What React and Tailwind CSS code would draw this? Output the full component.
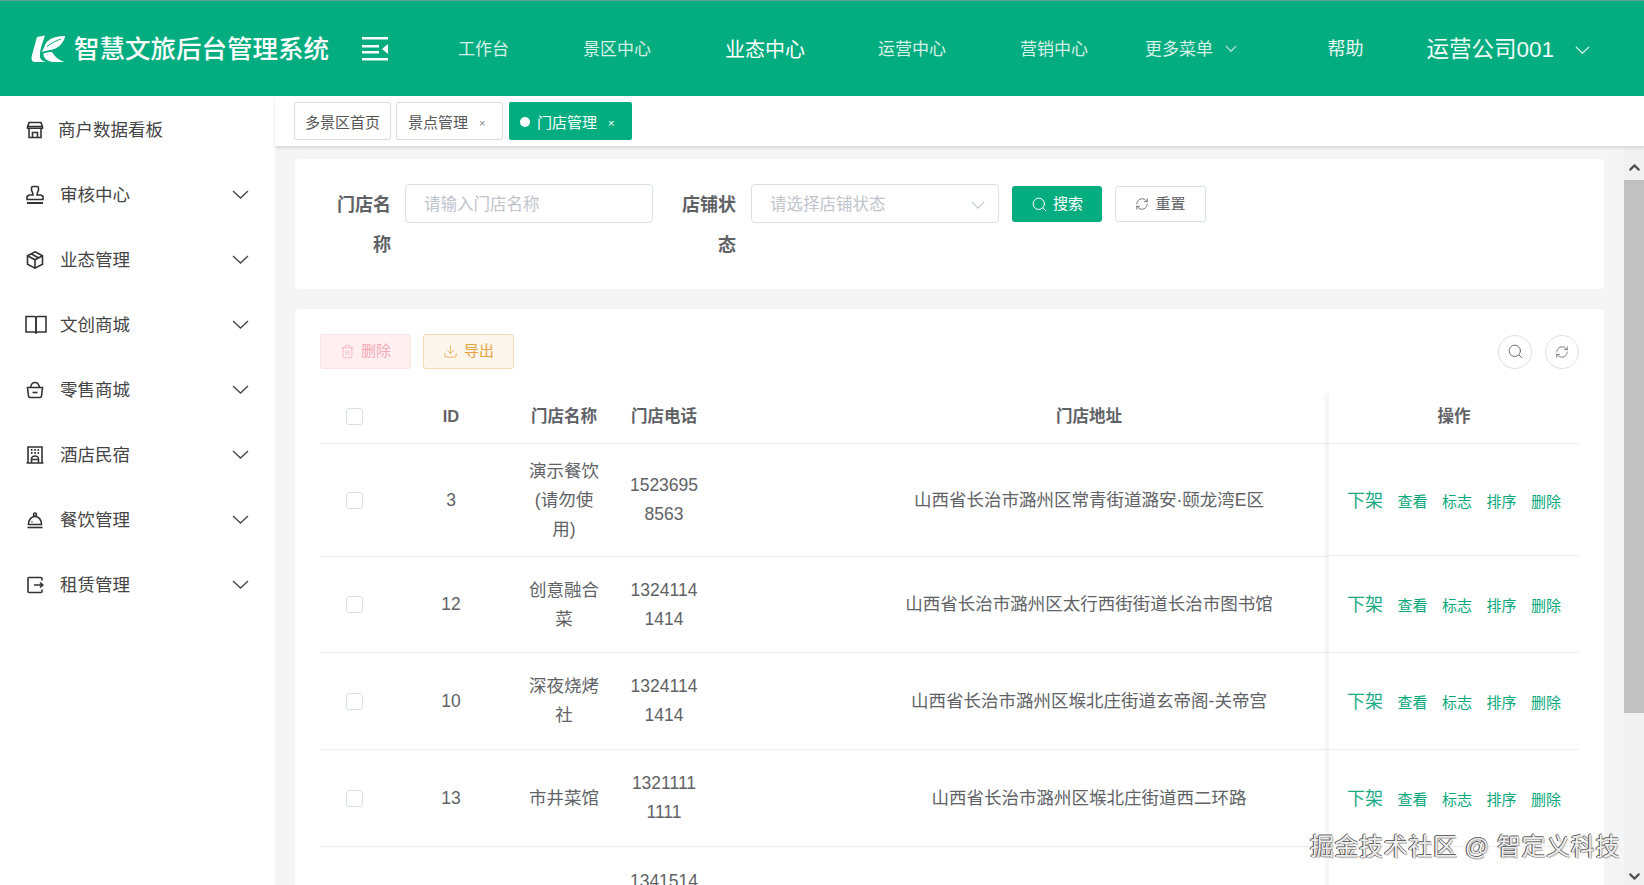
import { ChevronDown, ChevronUp, Search, RefreshCw, Trash2, Download } from "lucide-react";

const NAV = [
  { label: "工作台", className: "text-[17px] text-[#d6f1e8] ml-0" },
  { label: "景区中心", className: "text-[17px] text-[#d6f1e8] ml-[74px]" },
  { label: "业态中心", className: "text-[20px] text-white ml-[74px]" },
  { label: "运营中心", className: "text-[17px] text-[#d6f1e8] ml-[73px]" },
  { label: "营销中心", className: "text-[17px] text-[#d6f1e8] ml-[74px]" },
];

const iconProps = {
  width: 20,
  height: 20,
  viewBox: "0 0 20 20",
  fill: "none",
  stroke: "#333",
  strokeWidth: 1.6,
};

// the reference's chevrons are wide and flat, lucide's are too narrow
const Chevron = ({ width = 17, height = 9, className = "" }) => (
  <svg className={className} width={width} height={height} viewBox="0 0 17 9" fill="none" stroke="currentColor" strokeWidth="1.3" preserveAspectRatio="none">
    <path d="M1 1l7.500 7L16 1" />
  </svg>
);

const StoreIcon = () => (
  <svg {...iconProps}>
    <path d="M4 2.500h12l1.500 4.500v1.200h-15V7z" />
    <path d="M2.500 6.500h15" />
    <path d="M4 8.500v9h12v-9" />
    <path d="M7.500 17.500v-5h5v5" />
  </svg>
);
const StampIcon = () => (
  <svg {...iconProps}>
    <path d="M8 1.500h4c1 0 1.500.7 1.500 1.500v2c0 1-1.500 2.500-1.500 5h4l2 1.500v3H2v-3L4 10h4c0-2.500-1.500-4-1.500-5V3c0-.8.500-1.500 1.500-1.500z" />
    <path d="M2 18h16" strokeWidth="2" />
  </svg>
);
const BoxIcon = () => (
  <svg {...iconProps}>
    <path d="M10 1.800l7.500 4v8.400l-7.500 4-7.500-4V5.800z" />
    <path d="M2.500 5.800l7.500 4 7.500-4M10 9.800v8.400M6 3.800l7.500 4" />
  </svg>
);
const BookIcon = () => (
  <svg {...iconProps} width="22" height="20" viewBox="0 0 22 20">
    <path d="M1 1.500h8c1.200 0 2 .8 2 2v15c0-.8-.8-1.500-2-1.500H1z" />
    <path d="M21 1.500h-8c-1.200 0-2 .8-2 2v15c0-.8.8-1.500 2-1.500h8z" />
  </svg>
);
const BasketIcon = () => (
  <svg {...iconProps}>
    <path d="M2.500 7.500h15l-1 8.500c-.1 1-.8 1.500-1.600 1.500H5.100c-.8 0-1.500-.5-1.600-1.500z" />
    <path d="M5.500 7.500C6 4.500 8 2.500 10 2.500s4 2 4.500 5" />
    <path d="M7.500 12.500h5" />
  </svg>
);
const HotelIcon = () => (
  <svg {...iconProps}>
    <path d="M3 18V2h14v16M1.500 18h17" />
    <path d="M6 5h1.500M9.300 5h1.500M12.600 5H14M6 8h1.500M9.300 8h1.500M12.600 8H14" strokeWidth="1.800" />
    <path d="M6.500 18v-4c0-1.500 1.500-3 3.500-3s3.500 1.500 3.500 3v4M6.500 14.500h7" />
  </svg>
);
const BellIcon = () => (
  <svg {...iconProps}>
    <path d="M3.500 14.500c0-5 3-8 6.500-8s6.500 3 6.500 8z" />
    <circle cx="10" cy="4.500" r="1.500" />
    <path d="M2.500 17.500h15" />
    <path d="M7 11.500v.8" strokeWidth="2" />
  </svg>
);
const ExitIcon = () => (
  <svg {...iconProps}>
    <path d="M17 5.500V3.500c0-.6-.4-1-1-1H4c-.6 0-1 .4-1 1v13c0 .6.4 1 1 1h12c.6 0 1-.4 1-1v-2" />
    <path d="M9 10h9M15 7.500l2.800 2.500-2.800 2.500" />
  </svg>
);

const MENU = [
  { label: "审核中心", Icon: StampIcon },
  { label: "业态管理", Icon: BoxIcon },
  { label: "文创商城", Icon: BookIcon },
  { label: "零售商城", Icon: BasketIcon },
  { label: "酒店民宿", Icon: HotelIcon },
  { label: "餐饮管理", Icon: BellIcon },
  { label: "租赁管理", Icon: ExitIcon },
];

const ROWS = [
  { id: "3", name: "演示餐饮(请勿使用)", phone: ["1523695", "8563"], address: "山西省长治市潞州区常青街道潞安·颐龙湾E区", height: "h-[113px]", opsHeight: "h-[112px]" },
  { id: "12", name: "创意融合菜", phone: ["1324114", "1414"], address: "山西省长治市潞州区太行西街街道长治市图书馆", height: "h-[96px]", opsHeight: "h-[97px]" },
  { id: "10", name: "深夜烧烤社", phone: ["1324114", "1414"], address: "山西省长治市潞州区堠北庄街道玄帝阁-关帝宫", height: "h-[97px]", opsHeight: "h-[97px]" },
  { id: "13", name: "市井菜馆", phone: ["1321111", "1111"], address: "山西省长治市潞州区堠北庄街道西二环路", height: "h-[97px]", opsHeight: "h-[97px]" },
];

function Checkbox() {
  return <span className="block w-[17px] h-[17px] rounded-[3px] border border-[#dcdfe6] bg-white" />;
}

function Logo() {
  return (
    <svg width="34" height="28" viewBox="0 0 34 28" fill="#fff">
      <path d="M6 2 L14 0.500 C11 9 8.500 16 9 22 C9.300 24.500 11 26 15 27 L4 27 C0.500 27 0 23.500 1 20 Z" />
      <path d="M34 1 C26 1 17 3 14 10 C13 13 12 15 10.500 17 C17 15 27 15 31 8 C33 5 34 3 34 1 Z" />
      <path d="M16 11.500 C20 8 25 6 30 4" stroke="#04ad7f" strokeWidth="1" fill="none" />
      <path d="M12.500 18.500 C15 17.500 18 17 21 17 C24 22 28 25.500 33.500 27 L21 27 C16 26 12 22.500 12.500 18.500 Z" />
    </svg>
  );
}

function Header() {
  return (
    <header className="h-[96px] shrink-0 flex items-center bg-[#04ad7f] border-t border-[#5fa592] pl-[31px] pr-[54px]">
      <Logo />
      <span className="ml-[9px] pt-[1px] w-[255px] text-[25.500px] font-medium text-white whitespace-nowrap">智慧文旅后台管理系统</span>
      <svg className="ml-[33px]" width="27" height="24" viewBox="0 0 27 24" fill="#fff">
        <rect x="0" y="0" width="26" height="2.500" />
        <rect x="0" y="8" width="17" height="2.500" />
        <rect x="0" y="14" width="17" height="2.500" />
        <rect x="0" y="21" width="26" height="2.500" />
        <path d="M26 7 V17 L20 12 Z" />
      </svg>
      <nav className="flex items-center ml-[69px] pt-[2px]">
        {NAV.map((item) => (
          <span key={item.label} className={`whitespace-nowrap ${item.className}`}>{item.label}</span>
        ))}
        <span className="ml-[57px] text-[17px] text-[#d6f1e8] whitespace-nowrap">更多菜单</span>
        <Chevron width={12} height={7} className="ml-[12px] mb-[2px] text-[#d6f1e8]" />
      </nav>
      <div className="ml-auto flex items-center pt-[2px]">
        <span className="text-[18px] text-[#e8f8f3]">帮助</span>
        <span className="ml-[63px] text-[22.500px] text-[#f2fbf8] whitespace-nowrap">运营公司001</span>
        <Chevron width={15} height={8} className="ml-[21px] text-[#e8f8f3]" />
      </div>
    </header>
  );
}

function Sidebar() {
  return (
    <aside className="w-[275px] shrink-0 bg-white pt-[1px] text-[#444]">
      <div className="h-[65px] flex items-center pl-[25px] gap-[13px]">
        <StoreIcon />
        <span className="pt-[2px] text-[17.500px]">商户数据看板</span>
      </div>
      {MENU.map(({ label, Icon }) => (
        <div key={label} className="h-[65px] flex items-center pl-[25px] pr-[26px]">
          <span className="w-[35px] flex"><Icon /></span>
          <span className="pt-[2px] text-[17.500px]">{label}</span>
          <Chevron className="ml-auto" />
        </div>
      ))}
    </aside>
  );
}

function Tabs() {
  return (
    <div className="h-[50px] shrink-0 bg-white flex items-start pt-[6px] pl-[19px] shadow-[0_2px_3px_rgba(0,0,0,0.12)] relative text-[15px] text-[#555]">
      <span className="h-[38px] w-[97px] pt-[4px] flex items-center justify-center border border-[#dcdcdc] rounded-[2px]">多景区首页</span>
      <span className="ml-[5px] h-[38px] w-[107px] pt-[4px] flex items-center pl-[11px] border border-[#dcdcdc] rounded-[2px]">
        景点管理<span className="ml-[11px] text-[11px] text-[#888]">×</span>
      </span>
      <span className="ml-[6px] h-[38px] w-[123px] pt-[4px] flex items-center pl-[11px] rounded-[2px] bg-[#04ad7f] text-white">
        <span className="w-[10px] h-[10px] rounded-full bg-white mr-[7px] mb-[3px]" />
        门店管理<span className="ml-[11px] text-[11px]">×</span>
      </span>
    </div>
  );
}

function SearchCard() {
  return (
    <section className="h-[130px] shrink-0 bg-white rounded-[4px] flex items-start pt-[25px] pl-[26px]">
      <label className="w-[70px] pt-[1px] text-right text-[18px] leading-[40px] font-bold text-[#606266]">门店名称</label>
      <input
        className="ml-[14px] w-[248px] h-[39px] rounded-[4px] border border-[#dcdfe6] pl-[18px] pt-[2px] text-[16.500px] outline-none placeholder:text-[#c0c4cc]"
        placeholder="请输入门店名称"
      />
      <label className="ml-[13px] w-[70px] pt-[1px] text-right text-[18px] leading-[40px] font-bold text-[#606266]">店铺状态</label>
      <div className="ml-[15px] w-[248px] h-[39px] rounded-[4px] border border-[#dcdfe6] pl-[18px] pr-[13px] pt-[2px] flex items-center justify-between text-[16.500px] text-[#c0c4cc]">
        请选择店铺状态
        <Chevron width={14} height={8} />
      </div>
      <button className="ml-[13px] mt-[2px] w-[90px] h-[36px] rounded-[3px] bg-[#04ad7f] text-white text-[15px] flex items-center justify-center gap-[5px]">
        <Search size={17} strokeWidth={1.4} /><span className="pt-[1px]">搜索</span>
      </button>
      <button className="ml-[13px] mt-[2px] w-[91px] h-[36px] rounded-[3px] bg-white border border-[#dcdfe6] text-[#606266] text-[15px] flex items-center justify-center gap-[6px]">
        <RefreshCw size={14} strokeWidth={1.4} /><span className="pt-[1px]">重置</span>
      </button>
    </section>
  );
}

function OpsCell() {
  return (
    <div className="h-full pt-[3px] flex items-center justify-center gap-[14.500px] text-[15px] text-[#07a87c]">
      <span className="text-[18px] text-[#1aab85]">下架</span>
      <span>查看</span>
      <span>标志</span>
      <span>排序</span>
      <span>删除</span>
    </div>
  );
}

function DataTable() {
  return (
    <div className="relative mt-[21px] flex-1 overflow-hidden text-[17.500px] leading-[29px] text-[#606266] text-center">
      <div className="h-[54px] flex items-center border-b border-[#ebeef5] text-[16.500px] font-bold">
        <div className="w-[68px] flex justify-center"><Checkbox /></div>
        <div className="w-[126px]">ID</div>
        <div className="w-[100px]">门店名称</div>
        <div className="w-[100px]">门店电话</div>
        <div className="w-[750px]">门店地址</div>
      </div>
      {ROWS.map((row) => (
        <div key={row.id} className={`flex items-center border-b border-[#ebeef5] ${row.height}`}>
          <div className="w-[68px] flex justify-center"><Checkbox /></div>
          <div className="w-[126px]">{row.id}</div>
          <div className="w-[100px] px-[12px] break-all">{row.name}</div>
          <div className="w-[100px]">
            {row.phone.map((line) => <div key={line}>{line}</div>)}
          </div>
          <div className="w-[750px]">{row.address}</div>
        </div>
      ))}
      <div className="flex pt-[20px]">
        <div className="w-[294px]" />
        <div className="w-[100px]">1341514</div>
      </div>

      {/* fixed 操作 column sits over the scrolled table */}
      <div className="absolute right-0 top-0 bottom-0 w-[250px] bg-white shadow-[-5px_0_7px_-3px_rgba(0,0,0,0.07)]">
        <div className="h-[54px] flex items-center justify-center border-b border-[#ebeef5] text-[16.500px] font-bold">操作</div>
        {ROWS.map((row) => (
          <div key={row.id} className={`border-b border-[#ebeef5] ${row.opsHeight}`}>
            <OpsCell />
          </div>
        ))}
      </div>
    </div>
  );
}

function TableCard() {
  return (
    <section className="mt-[20px] flex-1 flex flex-col bg-white rounded-t-[4px] px-[25px] pt-[25px]">
      <div className="h-[35px] shrink-0 flex items-center text-[15px]">
        <button className="w-[91px] h-[35px] rounded-[3px] border border-[#fde2e2] bg-[#fef0f0] text-[#f5a8b4] flex items-center justify-center gap-[6px]">
          <Trash2 size={15} strokeWidth={1.2} />删除
        </button>
        <button className="ml-[12px] w-[91px] h-[35px] rounded-[3px] border border-[#f5dab1] bg-[#fdf6ec] text-[#e6a23c] flex items-center justify-center gap-[6px]">
          <Download size={15} strokeWidth={1.2} />导出
        </button>
        <button className="ml-auto w-[34px] h-[34px] rounded-full border border-[#dcdfe6] flex items-center justify-center text-[#606266]">
          <Search size={17} strokeWidth={1.3} />
        </button>
        <button className="ml-[13px] w-[34px] h-[34px] rounded-full border border-[#dcdfe6] flex items-center justify-center text-[#606266]">
          <RefreshCw size={14} strokeWidth={1.3} />
        </button>
      </div>
      <DataTable />
    </section>
  );
}

function Scrollbar() {
  return (
    <div className="w-[20px] shrink-0 flex flex-col bg-[#f1f1f1]">
      <div className="h-[34px] flex items-end justify-center pb-[4px]">
        <ChevronUp size={17} strokeWidth={3} className="text-[#505050]" />
      </div>
      <div className="h-[533px] bg-[#c1c1c1]" />
      <div className="flex-1 flex items-end justify-center">
        <ChevronDown size={17} strokeWidth={3} className="text-[#505050]" />
      </div>
    </div>
  );
}

export default function App() {
  return (
    <div className="relative w-[1644px] h-[885px] overflow-hidden flex flex-col bg-white font-['Liberation_Sans','Noto_Sans_CJK_SC',sans-serif]">
      <Header />
      <div className="flex-1 flex min-h-0">
        <Sidebar />
        <main className="flex-1 flex flex-col min-w-0 bg-[#f5f5f5]">
          <Tabs />
          <div className="flex-1 flex min-h-0">
            <div className="flex-1 min-w-0 flex flex-col pt-[13px] pl-[20px] pr-[20px]">
              <SearchCard />
              <TableCard />
            </div>
            <Scrollbar />
          </div>
        </main>
      </div>
      <span className="absolute right-[24px] top-[832px] text-[24px] leading-[30px] tracking-[0.6px] text-[#eeeeee] whitespace-nowrap [text-shadow:-1px_0_0_#444,0_-1px_0_#666,1px_1px_1px_#aaa]">
        掘金技术社区 @ 智定义科技
      </span>
    </div>
  );
}
